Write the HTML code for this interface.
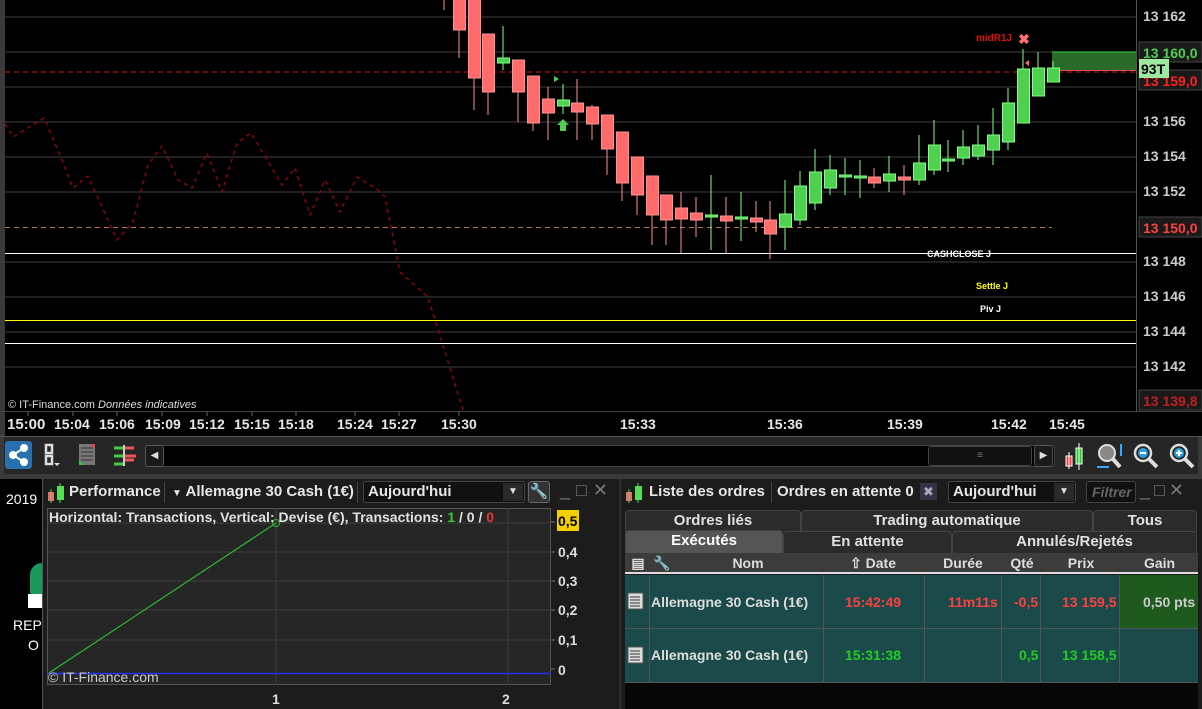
<!DOCTYPE html>
<html><head><meta charset="utf-8"><style>
*{margin:0;padding:0;box-sizing:border-box}
body{width:1202px;height:709px;background:#000;overflow:hidden;position:relative;font-family:"Liberation Sans",sans-serif;color:#ddd}
.abs{position:absolute}
.b{font-weight:bold}
.tl{position:absolute;top:416px;font-size:15px;font-weight:bold;color:#e8e8e8}
.hdr{position:absolute;top:480px;height:24px;background:#1e1e1e}
.tab{position:absolute;background:#2b2b2b;border:1px solid #444;border-bottom:none;border-radius:4px 4px 0 0;color:#e0e0e0;font-weight:bold;font-size:15px;text-align:center;line-height:20px}
.th{position:absolute;top:553px;height:21px;line-height:21px;font-size:14px;font-weight:bold;color:#ddd;text-align:center}
.cell{position:absolute;font-size:14px;font-weight:bold;line-height:20px}
</style></head><body>
<!-- main chart -->
<svg class="abs" style="left:0;top:0" width="1202" height="437">
<rect x="0" y="0" width="5" height="437" fill="#3a3a3a"/>
<g stroke="#2b2b2b" stroke-width="1.5">
<line x1="5" x2="1136" y1="17" y2="17"/><line x1="5" x2="1136" y1="52" y2="52"/><line x1="5" x2="1136" y1="87" y2="87"/><line x1="5" x2="1136" y1="122" y2="122"/><line x1="5" x2="1136" y1="157" y2="157"/><line x1="5" x2="1136" y1="192" y2="192"/><line x1="5" x2="1136" y1="262" y2="262"/><line x1="5" x2="1136" y1="297" y2="297"/><line x1="5" x2="1136" y1="332" y2="332"/><line x1="5" x2="1136" y1="367" y2="367"/>
</g>
<line x1="5" x2="1136" y1="72" y2="72" stroke="#d01818" stroke-dasharray="5,4"/>
<line x1="5" x2="1052" y1="227.5" y2="227.5" stroke="#c07050" stroke-dasharray="5,4"/>
<line x1="5" x2="1136" y1="253.5" y2="253.5" stroke="#fff"/>
<line x1="5" x2="1136" y1="320.5" y2="320.5" stroke="#ff0"/>
<line x1="5" x2="1136" y1="343.5" y2="343.5" stroke="#fff"/>
<polyline fill="none" stroke="#a00" stroke-width="1.2" stroke-dasharray="4,4" points="5,124 13,137 44,118 60,155 73,188 88,176 117,240 133,222 148,165 162,146 178,180 192,188 207,153 222,192 237,143 251,133 282,185 295,168 310,215 325,180 340,212 357,177 378,190 385,197 400,272 428,297 463,410"/>
<rect x="1052" y="52" width="84" height="19" fill="#2a6a2a"/>
<line x1="1052" x2="1136" y1="52" y2="52" stroke="#3c3"/>
<line x1="1052" x2="1136" y1="70.5" y2="70.5" stroke="#e05050"/>
<g id="c">
<!-- red candles -->
<g stroke="#ff9090" fill="#ff6b6b">
<line x1="444" x2="444" y1="0" y2="10"/>
<line x1="459" x2="459" y1="0" y2="58"/><rect x="453.5" y="-2" width="12" height="32"/>
<line x1="474" x2="474" y1="0" y2="110"/><rect x="468.5" y="-2" width="12" height="80"/>
<line x1="488" x2="488" y1="34" y2="115"/><rect x="482.5" y="34" width="12" height="58"/>
<line x1="518" x2="518" y1="60" y2="122"/><rect x="512.5" y="60" width="12" height="32"/>
<line x1="533" x2="533" y1="76" y2="131"/><rect x="527.5" y="76" width="12" height="47"/>
<line x1="548" x2="548" y1="87" y2="140"/><rect x="542.5" y="99" width="12" height="14"/>
<line x1="577" x2="577" y1="79" y2="140"/><rect x="571.5" y="103" width="12" height="9"/>
<line x1="592" x2="592" y1="105" y2="140"/><rect x="586.5" y="107" width="12" height="17"/>
<line x1="607" x2="607" y1="115" y2="175"/><rect x="601.5" y="115" width="12" height="34"/>
<line x1="622" x2="622" y1="132" y2="201"/><rect x="616.5" y="132" width="12" height="51"/>
<line x1="637" x2="637" y1="157" y2="215"/><rect x="631.5" y="157" width="12" height="38"/>
<line x1="652" x2="652" y1="176" y2="245"/><rect x="646.5" y="176" width="12" height="39"/>
<line x1="666" x2="666" y1="195" y2="245"/><rect x="660.5" y="195" width="12" height="25"/>
<line x1="681" x2="681" y1="192" y2="253"/><rect x="675.5" y="208" width="12" height="11"/>
<line x1="696" x2="696" y1="197" y2="237"/><rect x="690.5" y="213" width="12" height="7"/>
<line x1="726" x2="726" y1="197" y2="253"/><rect x="720.5" y="216" width="12" height="5"/>
<line x1="756" x2="756" y1="201" y2="232"/><rect x="750.5" y="218" width="12" height="4"/>
<line x1="770" x2="770" y1="201" y2="259"/><rect x="764.5" y="220" width="12" height="14"/>
<line x1="874" x2="874" y1="168" y2="188"/><rect x="868.5" y="177" width="12" height="6"/>
<line x1="904" x2="904" y1="165" y2="195"/><rect x="898.5" y="177" width="12" height="3"/>
</g>
<g stroke="#80ff80" fill="#4fd14f">
<line x1="503" x2="503" y1="26" y2="70"/><rect x="497.5" y="58" width="12" height="5"/>
<line x1="563" x2="563" y1="84" y2="114"/><rect x="557.5" y="100" width="12" height="6"/>
<line x1="711" x2="711" y1="175" y2="250"/><rect x="705.5" y="215" width="12" height="2"/>
<line x1="741" x2="741" y1="192" y2="241"/><rect x="735.5" y="217" width="12" height="2"/>
<line x1="785" x2="785" y1="180" y2="250"/><rect x="779.5" y="214" width="12" height="13"/>
<line x1="800" x2="800" y1="171" y2="225"/><rect x="794.5" y="186" width="12" height="34"/>
<line x1="815" x2="815" y1="149" y2="210"/><rect x="809.5" y="172" width="12" height="31"/>
<line x1="830" x2="830" y1="155" y2="195"/><rect x="824.5" y="170" width="12" height="18"/>
<line x1="845" x2="845" y1="158" y2="195"/><rect x="839.5" y="175" width="12" height="2"/>
<line x1="860" x2="860" y1="160" y2="198"/><rect x="854.5" y="176" width="12" height="2"/>
<line x1="889" x2="889" y1="156" y2="192"/><rect x="883.5" y="174" width="12" height="7"/>
<line x1="919" x2="919" y1="135" y2="185"/><rect x="913.5" y="163" width="12" height="17"/>
<line x1="934" x2="934" y1="120" y2="175"/><rect x="928.5" y="145" width="12" height="25"/>
<line x1="948" x2="948" y1="140" y2="172"/><rect x="942.5" y="159" width="12" height="2"/>
<line x1="963" x2="963" y1="130" y2="165"/><rect x="957.5" y="147" width="12" height="11"/>
<line x1="978" x2="978" y1="125" y2="160"/><rect x="972.5" y="145" width="12" height="11"/>
<line x1="993" x2="993" y1="108" y2="165"/><rect x="987.5" y="135" width="12" height="15"/>
<line x1="1008" x2="1008" y1="88" y2="150"/><rect x="1002.5" y="103" width="12" height="39"/>
<line x1="1023" x2="1023" y1="49" y2="123"/><rect x="1017.5" y="69" width="12" height="54"/>
<line x1="1038" x2="1038" y1="52" y2="96"/><rect x="1032.5" y="68" width="12" height="28"/>
<line x1="1053" x2="1053" y1="61" y2="82"/><rect x="1047.5" y="68" width="12" height="14"/>
</g>
</g>
<polygon points="563,119 569,125 566,125 566,131 560,131 560,125 557,125" fill="#4fd14f"/>
<polygon points="554,76 559,79 554,82" fill="#4fd14f"/>
<polygon points="1029,60 1029,66 1025,63" fill="#ff6b6b"/>
<text x="1024" y="44" font-size="14" font-weight="bold" fill="#ff7070" text-anchor="middle">✖</text>
<text x="976" y="41" font-size="10" font-weight="bold" fill="#e01010">midR1J</text>
<text x="927" y="257" font-size="9" font-weight="bold" fill="#fff">CASHCLOSE J</text>
<text x="976" y="289" font-size="9" font-weight="bold" fill="#ff0">Settle J</text>
<text x="980" y="312" font-size="9" font-weight="bold" fill="#fff">Piv J</text>
<text x="8" y="408" font-size="11" fill="#ddd">© IT-Finance.com <tspan font-style="italic">Données indicatives</tspan></text>
<!-- price axis -->
<rect x="1136" y="0" width="66" height="412" fill="#000"/>
<line x1="1136.5" x2="1136.5" y1="0" y2="412" stroke="#555"/>
<g font-size="14" font-weight="bold" fill="#ccc">
<text x="1143" y="21">13 162</text><text x="1143" y="126">13 156</text><text x="1143" y="161">13 154</text><text x="1143" y="196">13 152</text><text x="1143" y="266">13 148</text><text x="1143" y="301">13 146</text><text x="1143" y="336">13 144</text><text x="1143" y="371">13 142</text>
</g>
<rect x="1139" y="42" width="63" height="20" fill="#1a1a1a" stroke="#444"/>
<text x="1143" y="58" font-size="14" font-weight="bold" fill="#4fd14f">13 160,0</text>
<rect x="1139" y="70" width="63" height="20" fill="#1a1a1a" stroke="#444"/>
<text x="1143" y="86" font-size="14" font-weight="bold" fill="#ff2020">13 159,0</text>
<rect x="1139" y="59" width="30" height="19" fill="#9fe89f"/>
<text x="1141" y="74" font-size="14" font-weight="bold" fill="#000">93T</text>
<rect x="1139" y="217" width="63" height="20" fill="#1a1a1a" stroke="#444"/>
<text x="1143" y="233" font-size="14" font-weight="bold" fill="#ff4040">13 150,0</text>
<rect x="1139" y="390" width="63" height="20" fill="#1a1a1a" stroke="#444"/>
<text x="1143" y="406" font-size="14" font-weight="bold" fill="#c02020">13 139,8</text>
<line x1="0" x2="1202" y1="411.5" y2="411.5" stroke="#444"/>
<g stroke="#666"><line x1="28" x2="28" y1="412" y2="416"/><line x1="73" x2="73" y1="412" y2="416"/><line x1="117" x2="117" y1="412" y2="416"/><line x1="162" x2="162" y1="412" y2="416"/><line x1="207" x2="207" y1="412" y2="416"/><line x1="252" x2="252" y1="412" y2="416"/><line x1="296" x2="296" y1="412" y2="416"/><line x1="355" x2="355" y1="412" y2="416"/><line x1="399" x2="399" y1="412" y2="416"/><line x1="459" x2="459" y1="412" y2="416"/></g>
<line x1="0" x2="1202" y1="436.5" y2="436.5" stroke="#555"/>
</svg>
<div class="tl" style="left:7px">15:00</div><div class="tl" style="left:54px;font-size:14px">15:04</div><div class="tl" style="left:99px;font-size:14px">15:06</div><div class="tl" style="left:145px;font-size:14px">15:09</div><div class="tl" style="left:189px;font-size:14px">15:12</div><div class="tl" style="left:234px;font-size:14px">15:15</div><div class="tl" style="left:278px;font-size:14px">15:18</div><div class="tl" style="left:337px;font-size:14px">15:24</div><div class="tl" style="left:381px;font-size:14px">15:27</div><div class="tl" style="left:441px;font-size:14px">15:30</div><div class="tl" style="left:620px;font-size:14px">15:33</div><div class="tl" style="left:767px;font-size:14px">15:36</div><div class="tl" style="left:887px;font-size:14px">15:39</div><div class="tl" style="left:991px;font-size:14px">15:42</div><div class="tl" style="left:1049px;font-size:14px">15:45</div>
<!-- toolbar -->
<div class="abs" style="left:0;top:437px;width:1202px;height:37px;background:#262626;border-left:4px solid #3a3a3a;border-right:4px solid #3a3a3a"></div>
<div class="abs" style="left:5px;top:441px;width:27px;height:28px;background:#2a6fae;border-radius:3px"></div>
<svg class="abs" style="left:5px;top:441px" width="27" height="28"><g fill="#fff" stroke="#fff" stroke-width="2"><circle cx="19" cy="7" r="3"/><circle cx="8" cy="14" r="3"/><circle cx="19" cy="21" r="3"/><line x1="19" y1="7" x2="8" y2="14"/><line x1="8" y1="14" x2="19" y2="21"/></g></svg>
<svg class="abs" style="left:40px;top:441px" width="28" height="28"><path d="M6 4h6v8H6zM6 15h6v8H6z" fill="none" stroke="#ddd" stroke-width="2.5"/><polygon points="14,22 20,22 17,25" fill="#ddd"/></svg>
<svg class="abs" style="left:78px;top:443px" width="20" height="24"><rect x="1" y="1" width="16" height="21" fill="#777"/><path d="M3 5h12M3 9h12M3 13h12M3 17h12" stroke="#333"/><polygon points="12,1 17,1 17,6" fill="#e44"/><polygon points="1,22 1,17 6,22" fill="#3c3"/></svg>
<svg class="abs" style="left:112px;top:443px" width="26" height="24"><g stroke-width="3"><path d="M2 5h10M2 13h10M2 21h10" stroke="#4c4"/><path d="M12 5h10M12 13h12M12 17h10" stroke="#e55"/></g><path d="M12 2v21" stroke="#ccc" stroke-width="2"/></svg>
<div class="abs" style="left:145px;top:445px;width:910px;height:22px;background:#000;border:1px solid #444;border-radius:3px"></div>
<div class="abs" style="left:145px;top:445px;width:19px;height:22px;background:#1a1a1a;border:1px solid #555;border-radius:3px;color:#ddd;font-size:10px;line-height:20px;text-align:center">◀</div>
<div class="abs" style="left:928px;top:446px;width:104px;height:20px;background:#111;border:1px solid #444;border-radius:3px;color:#777;font-size:10px;line-height:18px;text-align:center">≡</div>
<div class="abs" style="left:1034px;top:445px;width:19px;height:22px;background:#1a1a1a;border:1px solid #555;border-radius:3px;color:#ddd;font-size:10px;line-height:20px;text-align:center">▶</div>
<svg class="abs" style="left:1062px;top:442px" width="26" height="28"><rect x="4" y="14" width="6" height="10" fill="#e44" stroke="#fff"/><rect x="14" y="6" width="6" height="16" fill="#2c2" stroke="#fff"/><path d="M17 1v27M7 10v17" stroke="#fff"/></svg>
<svg class="abs" style="left:1095px;top:442px" width="30" height="28"><circle cx="12" cy="11" r="8" fill="#888" stroke="#ddd" stroke-width="2"/><path d="M18 17l7 8" stroke="#ddd" stroke-width="4"/><path d="M26 2v12M2 25h12" stroke="#3af" stroke-width="2"/></svg>
<svg class="abs" style="left:1132px;top:442px" width="28" height="28"><circle cx="11" cy="11" r="8" fill="none" stroke="#ddd" stroke-width="2.5"/><path d="M17 17l8 8" stroke="#ddd" stroke-width="4"/><circle cx="11" cy="11" r="5" fill="#2aa0e0"/><path d="M8 11h6" stroke="#fff" stroke-width="2"/></svg>
<svg class="abs" style="left:1168px;top:442px" width="28" height="28"><circle cx="11" cy="11" r="8" fill="none" stroke="#ddd" stroke-width="2.5"/><path d="M17 17l8 8" stroke="#ddd" stroke-width="4"/><circle cx="11" cy="11" r="5" fill="#2aa0e0"/><path d="M8 11h6M11 8v6" stroke="#fff" stroke-width="2"/></svg>
<div class="abs" style="left:0;top:474px;width:1202px;height:5px;background:#3a3a3a"></div>
<!-- desktop strip -->
<div class="abs" style="left:6px;top:491px;font-size:14px;color:#fff">2019</div>
<div class="abs" style="left:30px;top:563px;width:12px;height:40px;background:#1a9a5a;border-radius:12px 0 0 12px"></div>
<div class="abs" style="left:28px;top:594px;width:14px;height:14px;background:#fff"></div>
<div class="abs" style="left:13px;top:617px;font-size:14px;color:#fff">REP</div>
<div class="abs" style="left:28px;top:637px;font-size:14px;color:#fff">O</div>
<div class="abs" style="left:42px;top:479px;width:1px;height:230px;background:#555"></div>
<!-- left panel -->
<div class="abs" style="left:43px;top:479px;width:576px;height:230px;background:#1c1c1c"></div>
<svg class="abs" style="left:46px;top:483px" width="22" height="20"><rect x="2" y="9" width="6" height="9" fill="#ee6b6b"/><rect x="11" y="3" width="7" height="14" fill="#5d5"/><path d="M14 0v20M5 6v14" stroke="#5d5"/></svg>
<div class="abs b" style="left:69px;top:483px;font-size:15px;color:#e6e6e6">Performance</div>
<div class="abs" style="left:164px;top:482px;width:1px;height:21px;background:#444"></div>
<div class="abs b" style="left:172px;top:483px;font-size:15px;color:#e6e6e6"><span style="font-size:10px">▼</span> Allemagne 30 Cash (1€)</div>
<div class="abs" style="left:357px;top:482px;width:1px;height:21px;background:#444"></div>
<div class="abs" style="left:363px;top:481px;width:162px;height:22px;background:#111;border:1px solid #444;border-radius:3px"></div>
<div class="abs b" style="left:368px;top:483px;font-size:15px;color:#e6e6e6">Aujourd'hui</div>
<div class="abs" style="left:503px;top:483px;width:20px;height:18px;background:#2a2a2a;color:#ddd;font-size:10px;text-align:center;line-height:18px">▼</div>
<div class="abs" style="left:528px;top:481px;width:22px;height:22px;background:#333;border:1px solid #666;border-radius:3px;color:#ddd;text-align:center;font-size:15px">🔧</div>
<div class="abs" style="left:560px;top:480px;font-size:18px;color:#777;letter-spacing:6px">_□✕</div>
<div class="abs" style="left:47px;top:508px;width:504px;height:177px;background:#262626;border:1px solid #555"></div>
<svg class="abs" style="left:47px;top:508px" width="572" height="201">
<g stroke="#3e3e3e"><line x1="0" x2="504" y1="15" y2="15"/><line x1="0" x2="504" y1="44" y2="44"/><line x1="0" x2="504" y1="73" y2="73"/><line x1="0" x2="504" y1="102" y2="102"/><line x1="0" x2="504" y1="132" y2="132"/><line x1="229" x2="229" y1="0" y2="177"/><line x1="461" x2="461" y1="0" y2="177"/></g>
<line x1="0" x2="504" y1="165.5" y2="165.5" stroke="#2233ee" stroke-width="1.5"/>
<line x1="2" y1="165" x2="229" y2="15" stroke="#2db92d" stroke-width="1.2"/>
<circle cx="229" cy="15" r="3.5" fill="none" stroke="#2db92d"/>
<g stroke="#777"><line x1="504" x2="508" y1="14" y2="14"/><line x1="504" x2="508" y1="44" y2="44"/><line x1="504" x2="508" y1="73" y2="73"/><line x1="504" x2="508" y1="102" y2="102"/><line x1="504" x2="508" y1="132" y2="132"/><line x1="504" x2="508" y1="161" y2="161"/></g>
<rect x="510" y="2" width="22" height="21" fill="#f5d000"/>
<g font-size="14" font-weight="bold" fill="#ddd"><text x="511" y="18" fill="#000">0,5</text><text x="511" y="49">0,4</text><text x="511" y="78">0,3</text><text x="511" y="107">0,2</text><text x="511" y="137">0,1</text><text x="511" y="167">0</text><text x="225" y="196">1</text><text x="455" y="196">2</text></g>
<text x="1" y="174" font-size="14" fill="#ccc">© IT-Finance.com</text>
</svg>
<div class="abs b" style="left:49px;top:509px;font-size:14px;color:#e0e0e0">Horizontal: Transactions, Vertical: Devise (€), Transactions: <span style="color:#3c3">1</span> / 0 / <span style="color:#e33">0</span></div>
<div class="abs" style="left:619px;top:479px;width:3px;height:230px;background:#2a2a2a"></div>
<!-- right panel -->
<div class="abs" style="left:622px;top:479px;width:580px;height:230px;background:#1c1c1c"></div>
<svg class="abs" style="left:624px;top:483px" width="22" height="20"><rect x="2" y="9" width="6" height="9" fill="#ee6b6b"/><rect x="11" y="3" width="7" height="14" fill="#5d5"/><path d="M14 0v20M5 6v14" stroke="#5d5"/></svg>
<div class="abs b" style="left:649px;top:483px;font-size:15px;color:#e6e6e6">Liste des ordres</div>
<div class="abs" style="left:771px;top:482px;width:1px;height:21px;background:#444"></div>
<div class="abs b" style="left:777px;top:483px;font-size:15px;color:#e6e6e6">Ordres en attente 0</div>
<div class="abs" style="left:920px;top:483px;width:17px;height:17px;background:#334;color:#aab;font-size:13px;text-align:center;line-height:17px">✖</div>
<div class="abs" style="left:948px;top:481px;width:128px;height:22px;background:#111;border:1px solid #444;border-radius:3px"></div>
<div class="abs b" style="left:953px;top:483px;font-size:15px;color:#e6e6e6">Aujourd'hui</div>
<div class="abs" style="left:1054px;top:483px;width:20px;height:18px;background:#2a2a2a;color:#ddd;font-size:10px;text-align:center;line-height:18px">▼</div>
<div class="abs" style="left:1086px;top:481px;width:50px;height:22px;background:#111;border:1px solid #444;border-radius:3px;color:#666;font-style:italic;font-weight:bold;font-size:14px;line-height:20px;padding-left:5px;overflow:hidden">Filtrer</div>
<div class="abs" style="left:1140px;top:480px;font-size:18px;color:#777;letter-spacing:4px">_□✕</div>
<div class="tab" style="left:625px;top:510px;width:176px;height:22px">Ordres liés</div>
<div class="tab" style="left:801px;top:510px;width:292px;height:22px">Trading automatique</div>
<div class="tab" style="left:1093px;top:510px;width:104px;height:22px">Tous</div>
<div class="tab" style="left:625px;top:530px;width:158px;height:23px;background:#555;color:#fff">Exécutés</div>
<div class="tab" style="left:783px;top:531px;width:169px;height:22px">En attente</div>
<div class="tab" style="left:952px;top:531px;width:245px;height:22px">Annulés/Rejetés</div>
<div class="abs" style="left:625px;top:553px;width:573px;height:21px;background:#3c3c3c;border-bottom:2px solid #ddd"></div>
<div class="th" style="left:628px;width:20px">▤</div>
<div class="th" style="left:652px;width:20px;color:#aaa">🔧</div>
<div class="th" style="left:673px;width:150px">Nom</div>
<div class="th" style="left:823px;width:100px">⇧ Date</div>
<div class="th" style="left:923px;width:80px">Durée</div>
<div class="th" style="left:1003px;width:38px">Qté</div>
<div class="th" style="left:1041px;width:80px">Prix</div>
<div class="th" style="left:1121px;width:77px">Gain</div>
<div class="abs" style="left:625px;top:575px;width:573px;height:107px;background:#1a4a4a"></div>
<div class="abs" style="left:1119px;top:575px;width:79px;height:53px;background:#1e5a1e"></div>
<svg class="abs" style="left:625px;top:575px" width="573" height="108"><g stroke="#555"><line x1="24.5" x2="24.5" y1="0" y2="107"/><line x1="198.5" x2="198.5" y1="0" y2="107"/><line x1="299.5" x2="299.5" y1="0" y2="107"/><line x1="376.5" x2="376.5" y1="0" y2="107"/><line x1="415.5" x2="415.5" y1="0" y2="107"/><line x1="494.5" x2="494.5" y1="0" y2="107"/><line x1="0" x2="573" y1="53.5" y2="53.5"/><line x1="0" x2="573" y1="107.5" y2="107.5"/></g>
<g fill="#ddd" stroke="#555"><rect x="3" y="18" width="15" height="16"/><rect x="3" y="72" width="15" height="16"/></g>
<g stroke="#333"><path d="M5 22h10M5 25h10M5 28h10M5 31h10M5 76h10M5 79h10M5 82h10M5 85h10"/></g></svg>
<div class="cell" style="left:651px;top:592px;color:#ddd">Allemagne 30 Cash (1€)</div>
<div class="cell" style="left:845px;top:592px;color:#ff4040">15:42:49</div>
<div class="cell" style="left:948px;top:592px;color:#ff4040">11m11s</div>
<div class="cell" style="left:1014px;top:592px;color:#ff4040">-0,5</div>
<div class="cell" style="left:1062px;top:592px;color:#ff4040">13 159,5</div>
<div class="cell" style="left:1143px;top:592px;color:#ccc">0,50 pts</div>
<div class="cell" style="left:651px;top:645px;color:#ddd">Allemagne 30 Cash (1€)</div>
<div class="cell" style="left:845px;top:645px;color:#2c2">15:31:38</div>
<div class="cell" style="left:1019px;top:645px;color:#2c2">0,5</div>
<div class="cell" style="left:1062px;top:645px;color:#2c2">13 158,5</div>
<div class="abs" style="left:625px;top:683px;width:573px;height:26px;background:#070707"></div>
</body></html>
